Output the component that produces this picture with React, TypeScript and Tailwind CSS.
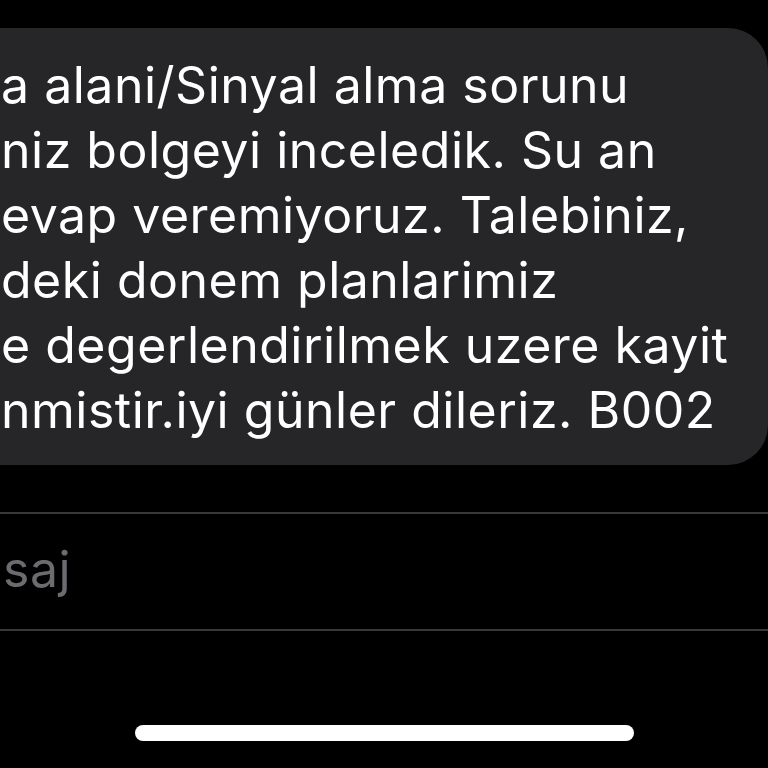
import React from 'react';

const lines = [
  'a alani/Sinyal alma sorunu',
  'niz bolgeyi inceledik. Su an',
  'evap veremiyoruz. Talebiniz,',
  'deki donem planlarimiz',
  'e degerlendirilmek uzere kayit',
  'nmistir.iyi günler dileriz. B002',
];

export default function App() {
  return (
    <div
      className="w-[768px] h-[768px] bg-black overflow-hidden flex flex-col"
      style={{ fontFamily: 'Inter, "Noto Sans", sans-serif' }}
    >
      {/* incoming message bubble, cut off on the left */}
      <div className="mt-[28px] h-[437px] bg-[#262629] rounded-r-[40px] pt-[25px] pl-[1px] text-white text-[50px] leading-[65px] tracking-[0.5px]">
        {lines.map((l, i) => (
          <div key={i} className="whitespace-nowrap">{l}</div>
        ))}
      </div>

      {/* input area */}
      <div className="mt-[47px] h-[2px] bg-[#38383a]" />
      <div className="h-[115px] flex items-center pl-[3px] pb-[4px] text-[50px] tracking-[0.5px] text-[#6c6c70]">saj</div>
      <div className="h-[2px] bg-[#38383a]" />

      {/* home indicator */}
      <div className="flex-1 flex justify-center">
        <div className="mt-[94px] w-[499px] h-[16px] rounded-full bg-white" />
      </div>
    </div>
  );
}
